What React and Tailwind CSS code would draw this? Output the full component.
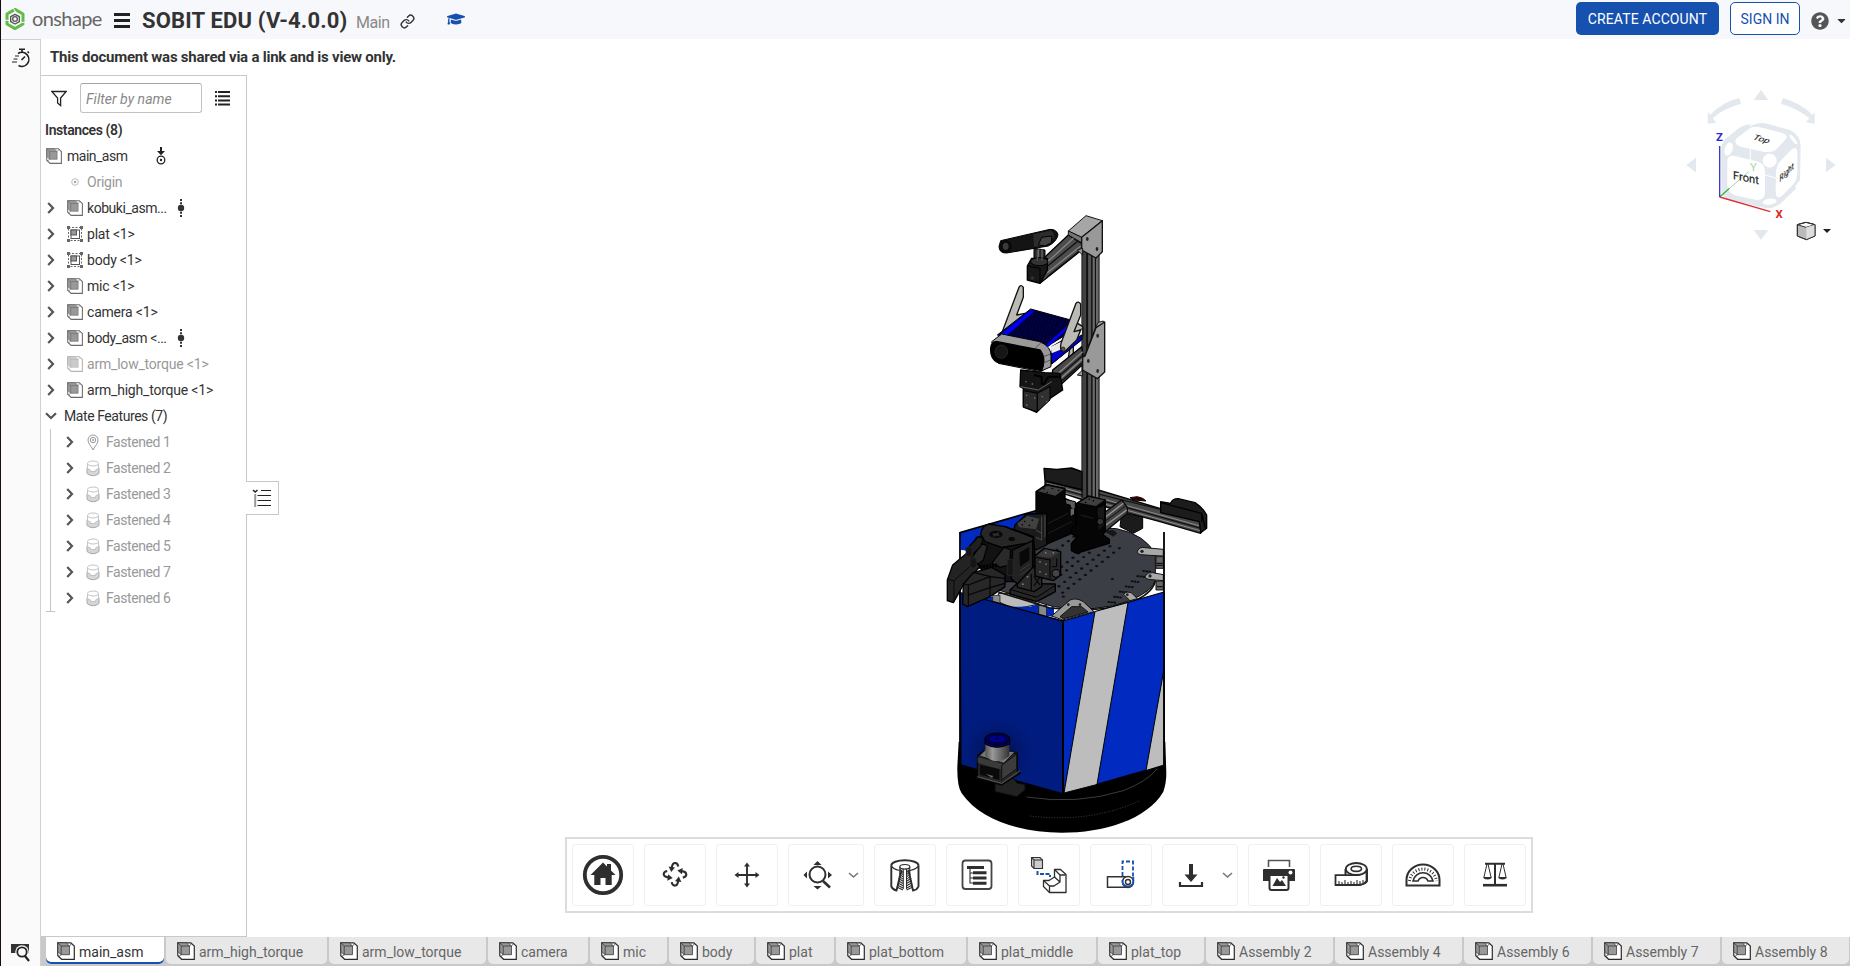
import React from "react";
import { Link } from "lucide-react";
import { FaGraduationCap, FaCaretDown, FaQuestionCircle } from "react-icons/fa";

function AsmIcon({ size = 18, soft = false, faded = false }) {
  const line = soft ? "#6b6b6b" : "#2b2b2b";
  return (
    <svg width={size} height={size} viewBox="0 0 18 18" className={faded ? "shrink-0 opacity-50" : "shrink-0"}>
      <path d="M.8 .8H13.8L17.3 4V17.3H4.6L.8 13.8Z" fill="#fff" stroke={line} strokeWidth="1.2" />
      <path d="M.8 .8H9L12.5 4V12.7H4.2L.8 9.5Z" fill="#999" stroke={line} strokeWidth=".7" />
      <path d="M.8 .8L4.2 4H12.5M4.2 4V12.7M12.5 4L14.6 1.6M4.2 12.7L1.6 14.6" fill="none" stroke={line} strokeWidth=".7" />
    </svg>
  );
}

function GroupIcon() {
  return (
    <svg width="16" height="16" viewBox="0 0 16 16" className="shrink-0">
      <rect x="1.5" y="1.5" width="13" height="13" fill="none" stroke="#666" strokeDasharray="2 1.5" />
      <path d="M0 0h3v3H0zM13 0h3v3h-3zM0 13h3v3H0zM13 13h3v3h-3z" fill="#666" />
      <rect x="4" y="4" width="8.5" height="8.5" fill="#fff" stroke="#555" />
      <rect x="4" y="4" width="5.5" height="5" fill="#999" stroke="#555" />
    </svg>
  );
}

function MateIcon() {
  return (
    <svg width="14" height="17" viewBox="0 0 14 17" className="shrink-0">
      <path d="M1 8Q1 6.5 3 8L4.5 9.5V11.5H9.5V9.5L11 8Q13 6.5 13 8V13.5Q7 18 1 13.5Z" fill="#d6d6d6" stroke="#aaa" />
      <path d="M1.5 3.5V8.5L4.5 10V11.5H9.5V10L12.5 8.5V3.5" fill="#fff" stroke="#c4c4c4" />
      <ellipse cx="7" cy="3.5" rx="5.5" ry="2.5" fill="#fff" stroke="#c4c4c4" />
    </svg>
  );
}

function PinIcon() {
  return (
    <svg width="14" height="17" viewBox="0 0 14 17" className="shrink-0" fill="none" stroke="#999">
      <path d="M7 16C5 11.5 2 10 2 6A5 5 0 0 1 12 6C12 10 9 11.5 7 16Z" />
      <circle cx="7" cy="6" r="2.7" />
      <circle cx="7" cy="6" r="1" fill="#999" stroke="none" />
    </svg>
  );
}

function Chevron() {
  return (
    <svg width="8" height="12" viewBox="0 0 8 12" className="shrink-0">
      <path d="M1.2 1L6 6L1.2 11" fill="none" stroke="#555" strokeWidth="2.2" />
    </svg>
  );
}

function DofIcon() {
  return (
    <svg width="8" height="18" viewBox="0 0 8 18" className="shrink-0" fill="#333">
      <circle cx="4" cy="9" r="3.2" />
      <path d="M3 0h2v2H3zM3 3.3h2v2H3zM3 12.7h2v2H3zM3 16h2v2H3z" />
    </svg>
  );
}

const instances = [
  { name: "kobuki_asm...", kind: "asm", dof: true },
  { name: "plat <1>", kind: "group" },
  { name: "body <1>", kind: "group" },
  { name: "mic <1>", kind: "asm" },
  { name: "camera <1>", kind: "asm" },
  { name: "body_asm <...", kind: "asm", dof: true },
  { name: "arm_low_torque <1>", kind: "asm", faded: true },
  { name: "arm_high_torque <1>", kind: "asm" },
];

const mates = [1, 2, 3, 4, 5, 7, 6];

const tabs = [
  ["main_asm", "w-[118px]"],
  ["arm_high_torque", "w-[161px]"],
  ["arm_low_torque", "w-[157px]"],
  ["camera", "w-[100px]"],
  ["mic", "w-[77px]"],
  ["body", "w-[85px]"],
  ["plat", "w-[78px]"],
  ["plat_bottom", "w-[130px]"],
  ["plat_middle", "w-[128px]"],
  ["plat_top", "w-[106px]"],
  ["Assembly 2", "w-[127px]"],
  ["Assembly 4", "w-[127px]"],
  ["Assembly 6", "w-[127px]"],
  ["Assembly 7", "w-[127px]"],
  ["Assembly 8", "w-[127px]"],
];

function Header() {
  return (
    <header className="flex h-[39px] shrink-0 items-center bg-[#f7f8fb] text-[#333]">
      <svg width="20" height="22" viewBox="0 0 60 66" className="mb-px ml-[4px]">
        <path d="M30 4L54 18V48L30 62L6 48V18Z" fill="none" stroke="#62bb46" strokeWidth="9" strokeLinejoin="round" />
        <path d="M24 0L32 12M60 44L46 42M0 36L14 38" stroke="#f7f8fb" strokeWidth="3" />
        <path d="M30 19L43 26V41L30 48L17 41V26Z" fill="none" stroke="#555" strokeWidth="4" strokeLinejoin="round" />
        <circle cx="30" cy="33" r="7" fill="none" stroke="#555" strokeWidth="4" />
      </svg>
      <span className="ml-[7px] mt-[-4px] w-[68px] font-[Lato] text-[20px] leading-none tracking-[-0.6px] text-[#666]">onshape</span>
      <div className="ml-[14px] mt-[2px] flex w-4 flex-col gap-[3px]">
        <i className="h-[3px] bg-[#222]" /><i className="h-[3px] bg-[#222]" /><i className="h-[3px] bg-[#222]" />
      </div>
      <h1 className="ml-[12px] mt-[2px] w-[206px] whitespace-nowrap text-[22px] font-bold leading-none tracking-[0.18px]">SOBIT EDU (V-4.0.0)</h1>
      <span className="ml-[8px] mt-[7px] w-[34px] text-[16px] leading-none tracking-[-0.4px] text-[#888]">Main</span>
      <Link size={15} strokeWidth={2.3} className="ml-[10px] mt-[3px]" />
      <FaGraduationCap size={18} className="ml-[32px] mt-[-2px] text-[#1651b0]" />
      <div className="ml-auto flex items-start self-stretch pt-[2px] text-[14px]">
        <button className="h-[33px] w-[143px] rounded-[5px] bg-[#1651b0] pt-px tracking-[0.1px] text-white">CREATE ACCOUNT</button>
        <button className="ml-[11px] h-[33px] w-[70px] rounded-[5px] border border-[#1651b0] bg-white pt-px text-[#1651b0]">SIGN IN</button>
        <FaQuestionCircle size={18} className="ml-[11px] mt-[10px] text-[#555]" />
        <FaCaretDown size={13} className="ml-[6px] mr-[2px] mt-[12px]" />
      </div>
    </header>
  );
}

function TreePanel() {
  return (
    <aside className="relative flex w-[206px] flex-col border-b border-r border-t border-[#c8c8c8] text-[14px] text-[#333]">
      <div className="flex h-[41px] shrink-0 items-center pl-[10px] pt-[3px]">
        <svg width="16" height="17" viewBox="0 0 16 17"><path d="M.8 1.5H15.2L9.6 8V15.5L6.6 13V8Z" fill="none" stroke="#222" strokeWidth="1.3" /></svg>
        <div className="ml-[13px] flex h-[30px] w-[122px] items-center rounded-[3px] border border-[#c2c2c2] border-t-[#a5a5a5] pl-[5px] pt-[3px] italic tracking-[0.04px] text-[#888]">Filter by name</div>
        <svg width="15" height="15" viewBox="0 0 15 15" className="ml-[13px]" fill="#222">
          <path d="M0 0h2v2H0zM3 0h12v2H3zM0 4.2h2v2H0zM3 4.2h12v2H3zM0 8.4h2v2H0zM3 8.4h12v2H3zM0 12.6h2v2H0zM3 12.6h12v2H3z" />
        </svg>
      </div>
      <div className="flex h-[26px] shrink-0 items-center pl-[4px] font-semibold tracking-[-0.4px]">Instances (8)</div>
      <div className="flex h-[26px] shrink-0 items-center pl-[5px]">
        <AsmIcon size={16} soft />
        <span className="ml-[5px] w-[89px] pt-px tracking-[-0.5px]">main_asm</span>
        <svg width="10" height="18" viewBox="0 0 10 18" fill="none" stroke="#222" strokeWidth="1.3">
          <path d="M5 0V6" strokeWidth="2" /><path d="M1 4H9L5 8.3Z" fill="#222" stroke="none" />
          <circle cx="5" cy="13" r="3.8" /><circle cx="5" cy="13" r="1.2" fill="#222" stroke="none" />
        </svg>
      </div>
      <div className="flex h-[26px] shrink-0 items-center pl-[30px] text-[#999]">
        <svg width="8" height="8" viewBox="0 0 8 8"><circle cx="4" cy="4" r="3.3" fill="none" stroke="#bbb" /><circle cx="4" cy="4" r="1.3" fill="#aaa" /></svg>
        <span className="ml-[8px] pt-px tracking-[-0.25px]">Origin</span>
      </div>
      {instances.map((it) => (
        <div key={it.name} className="flex h-[26px] shrink-0 items-center pl-[6px]">
          <Chevron />
          <div className="ml-[12px] flex w-[16px]">{it.kind === "asm" ? <AsmIcon size={16} soft faded={it.faded} /> : <GroupIcon />}</div>
          <span className={it.faded ? "ml-[4px] whitespace-nowrap pt-px tracking-[-0.2px] text-[#999]" : it.dof ? "ml-[4px] w-[90px] whitespace-nowrap pt-px tracking-[-0.45px]" : "ml-[4px] whitespace-nowrap pt-px tracking-[-0.2px]"}>{it.name}</span>
          {it.dof && <DofIcon />}
        </div>
      ))}
      <div className="flex h-[26px] shrink-0 items-center pl-[4px]">
        <svg width="12" height="8" viewBox="0 0 12 8"><path d="M1 1.2L6 6L11 1.2" fill="none" stroke="#555" strokeWidth="2.2" /></svg>
        <span className="ml-[7px] pt-px tracking-[-0.43px]">Mate Features (7)</span>
      </div>
      <div className="ml-[9px] flex flex-col border-l border-[#c4c4c4]">
        {mates.map((n) => (
          <div key={n} className="flex h-[26px] shrink-0 items-center pl-[15px] text-[#999]">
            <Chevron />
            <div className="ml-[12px] flex">{n === 1 ? <PinIcon /> : <MateIcon />}</div>
            <span className="ml-[6px] pt-px tracking-[-0.42px]">Fastened {n}</span>
          </div>
        ))}
      </div>
      <div className="ml-[5px] h-px w-[9px] shrink-0 bg-[#c4c4c4]" />
      <div className="absolute left-[205px] top-[405px] flex h-[34px] w-[33px] items-center justify-center border border-l-0 border-[#c8c8c8] bg-white">
        <svg width="19" height="18" viewBox="0 0 19 18" fill="none" stroke="#222" className="-ml-[2px]">
          <path d="M1 1L3.2 3L5.5 1" strokeWidth="1.5" /><path d="M3.2 5V18" stroke="#999" strokeWidth="2" />
          <path d="M9 1.5H19M5.5 6.5H19M5.5 11.5H19M5.5 16.5H19" strokeWidth="1.1" />
        </svg>
      </div>
    </aside>
  );
}

/* Deck hole rows: start x, start y, count; each runs down and to the left. */
const holeRows = [[568, 295, 11], [540, 289, 11], [478, 308, 6], [446, 310, 5], [432, 260, 5]];
const tableHoles = holeRows.flatMap(([x, y, n]) => Array.from({ length: n }, (_, i) => [x - i * 17, y + i * 13.3]));
const cornerHoles = [0, 1, 2].flatMap((r) => Array.from({ length: 7 }, (_, c) => [536 + c * 17.5 + r * 9, 456 - c * 15.5 + r]));

function Robot() {
  return (
    <svg width="290" height="640" viewBox="930 200 290 640" className="absolute left-[683px] top-[125px]">
      <defs>
        <linearGradient id="pole" x1="0" x2="1" y1="0" y2="0">
          <stop offset="0" stopColor="#3c3c3c" /><stop offset=".22" stopColor="#444" /><stop offset=".26" stopColor="#111" /><stop offset=".36" stopColor="#111" />
          <stop offset=".38" stopColor="#555" /><stop offset=".5" stopColor="#555" /><stop offset=".52" stopColor="#0c0c0c" /><stop offset=".62" stopColor="#2c2c2c" />
          <stop offset=".64" stopColor="#6d6d6d" /><stop offset=".74" stopColor="#6d6d6d" /><stop offset=".76" stopColor="#111" /><stop offset=".84" stopColor="#111" /><stop offset=".86" stopColor="#6a6a6a" /><stop offset="1" stopColor="#6a6a6a" />
        </linearGradient>
        <linearGradient id="lidar" x1="0" x2="1" y1="0" y2="0"><stop offset="0" stopColor="#555" /><stop offset=".3" stopColor="#999" /><stop offset="1" stopColor="#333" /></linearGradient>
        <radialGradient id="shade" cx="205" cy="400" r="130" gradientUnits="userSpaceOnUse"><stop offset="0" stopColor="#000830" stopOpacity=".9" /><stop offset="1" stopColor="#001c80" stopOpacity="0" /></radialGradient>
        <pattern id="mesh" width="10" height="8" patternUnits="userSpaceOnUse" patternTransform="rotate(17)"><rect width="10" height="8" fill="#000070" /><path d="M0 2H7M3 6H10" stroke="#00000c" strokeWidth="3.5" /><path d="M0 4L10 0" stroke="#0000c0" strokeWidth="1" /></pattern>
      </defs>

      {/* drive base */}
      <g transform="translate(930 620) scale(.33333)">
        <path d="M86 365L82 440Q81 500 95 520C150 600 270 638 395 638C520 638 650 600 700 515Q709 490 709 460L706 365Z" fill="#000" />
        <path d="M290 531Q440 555 580 512Q650 485 682 446" fill="none" stroke="#777" strokeWidth="1.5" />
        <path d="M300 588Q480 610 630 542" fill="none" stroke="#666" strokeWidth="1.5" strokeDasharray="4 4" />
      </g>

      {/* rear of the body and deck */}
      <g transform="translate(930 450) scale(.33333)">
        <path d="M90 248L325 180L400 230L220 310L92 300Z" fill="#002ac0" />
        <path d="M90 248L325 180" stroke="#000" strokeWidth="5" />
        <path d="M92 420L90 470L398 512L703 425L672 300L180 400Z" fill="#fff" />
        <path d="M92 440L190 440L210 460L398 512L92 512Z" fill="#0028b8" />
        <path d="M205 430L235 430L328 462L290 470L250 476L205 455Z" fill="#bbb" stroke="#111" strokeWidth="3" />
        <path d="M188 436H210V460L188 454Z" fill="#888" stroke="#111" strokeWidth="2" />
        <path d="M300 470L326 462V494L240 470Z" fill="#0028b8" />
        <path d="M326 466H350V502L326 496Z" fill="#888" stroke="#111" strokeWidth="3" />
        <path d="M350 475L372 470V500L350 498Z" fill="#0028b8" />
        <path d="M205 420L350 260Q450 225 560 236Q650 255 676 315V390Q672 420 600 452Q500 490 370 470Z" fill="#3b3f45" stroke="#0a0a0a" strokeWidth="3" />
        <path d="M205 426L360 474Q520 492 620 450Q670 425 676 392" fill="none" stroke="#111" strokeWidth="5" />
        {tableHoles.map(([x, y], i) => <ellipse key={i} cx={x} cy={y} rx="5" ry="3.5" fill="#0d0f12" />)}
        {cornerHoles.map(([x, y], i) => <ellipse key={i} cx={x} cy={y} rx="4.5" ry="3.2" fill="#0d0f12" />)}
        <ellipse cx="547" cy="387" rx="5" ry="3" fill="#111" /><ellipse cx="400" cy="440" rx="5" ry="3.5" fill="#111" />
        <path d="M520 242L550 240L562 250L550 260Z" fill="#15171a" />
        <g fill="#a8a8a8" stroke="#111" strokeWidth="3">
          <path d="M624 300Q630 290 645 293L700 298V318L660 316L632 314Q618 310 624 300Z" />
          <path d="M648 375Q655 366 668 368L700 374V392L676 390L656 388Q642 384 648 375Z" />
          <path d="M678 320H700V355H678ZM678 393H700V420H678Z" fill="#666" />
          <path d="M580 432Q590 422 604 428L622 446L600 452Z" />
        </g>
        <circle cx="636" cy="304" r="5" fill="#222" /><circle cx="660" cy="378" r="5" fill="#222" /><circle cx="592" cy="434" r="4" fill="#222" />
        <path d="M680 340H698M680 346H698M680 410H698" stroke="#111" strokeWidth="4" />
      </g>

      {/* outer panels */}
      <path d="M960 592.7L1063 621V794L961 765Z" fill="#001c80" stroke="#000" strokeWidth="1.3" />
      <path d="M1063 621L1164 592V765L1063 794Z" fill="#002ac0" stroke="#000" strokeWidth="1.3" />
      <path d="M1095 611.5L1128 602.5L1097 784.5L1064 793Z" fill="#bdbdbd" stroke="#000" strokeWidth="1" />
      <path d="M1164 669L1146 770.5L1164 765Z" fill="#bdbdbd" stroke="#000" strokeWidth="1" />
      <path d="M960 532V765M1164 532V765" stroke="#000" strokeWidth="1.8" />
      <path d="M1063 620V794" stroke="#000" strokeWidth="2" />

      {/* lidar */}
      <g transform="translate(930 620) scale(.33333)">
        <path d="M93 240H396V518L93 434Z" fill="url(#shade)" />
        <path d="M195 480L250 475L262 490L285 493V510L260 530L195 515Z" fill="#222" stroke="#0a0a0a" strokeWidth="3" />
        <path d="M143 408L160 392L262 400V455L270 460L215 495L142 475Z" fill="#262626" stroke="#050505" strokeWidth="4" />
        <path d="M148 408L168 388L255 395L222 430Z" fill="#777" stroke="#111" strokeWidth="3" />
        <path d="M143 412L218 432V450L143 428Z" fill="#3a3a3a" />
        <path d="M150 434L208 448V480L150 464Z" fill="#0a0a0a" /><path d="M168 462L190 468L186 474Z" fill="#666" />
        <path d="M215 436L260 402V446L215 480Z" fill="#3c3c3c" stroke="#111" strokeWidth="3" />
        <path d="M142 470L215 490L270 452" fill="none" stroke="#555" strokeWidth="3" />
        <path d="M166 360V408Q200 440 238 408V360Z" fill="url(#lidar)" />
        <path d="M165 355V372Q200 392 239 372V355Z" fill="#000070" stroke="#000" strokeWidth="3" />
        <ellipse cx="202" cy="357" rx="37" ry="18" fill="#00005c" stroke="#000" strokeWidth="3" />
        <ellipse cx="202" cy="357" rx="26" ry="12" fill="#000090" stroke="#000020" strokeWidth="3" />
        <path d="M196 356H208M202 352V360" stroke="#000" strokeWidth="2" />
      </g>

      {/* cross rails, motors and gripper */}
      <g transform="translate(930 450) scale(.33333)" strokeLinejoin="round">
        <path d="M365 498L420 450Q440 442 460 455L492 485L440 499L398 510Z" fill="#999" stroke="#111" strokeWidth="3" />
        <path d="M390 500L425 470H455L474 486L440 496L400 506Z" fill="#333" stroke="#111" strokeWidth="3" />
        <circle cx="415" cy="464" r="4" fill="#222" /><circle cx="450" cy="464" r="4" fill="#222" />
        <path d="M575 190L638 200V235L610 250L570 230Z" fill="#1b1b1b" stroke="#000" strokeWidth="3" />
        <path d="M600 143L622 140Q642 144 648 153L610 150Z" fill="#300" stroke="#100" strokeWidth="3" />
        <path d="M345 95L505 120L822 215L812 250L690 215L505 165L345 112Z" fill="#484848" stroke="#050505" strokeWidth="4" />
        <path d="M350 100L818 230M380 122L814 243" stroke="#999" strokeWidth="2.5" />
        <path d="M360 108L816 236M350 94L700 180" stroke="#111" strokeWidth="3.5" />
        <path d="M342 55L380 58L425 54L458 66V120L345 92Z" fill="#1c1c1c" stroke="#000" strokeWidth="4" />
        <path d="M692 155L722 160Q728 145 745 146L795 158Q820 175 830 195V235L812 248L808 215L692 188Z" fill="#1c1c1c" stroke="#000" strokeWidth="4" />
        <path d="M692 158L815 190L826 235M815 190V215" fill="none" stroke="#000" strokeWidth="4" />
        <path d="M520 190L575 150L592 172V190L525 245Z" fill="#444" stroke="#0a0a0a" strokeWidth="4" />
        <path d="M524 203L580 160M524 228L590 180" stroke="#999" strokeWidth="4" />
        <path d="M524 215L588 167" stroke="#111" strokeWidth="3" />

        {/* shoulder motors */}
        <path d="M318 125L350 103L405 115V145L438 160V235L425 250L345 285L318 200Z" fill="#060606" stroke="#000" strokeWidth="4" />
        <path d="M324 124L352 107L402 118L376 137Z" fill="#404040" /><path d="M340 116l4 1M365 115l4 1M384 121l4 1M350 127l4 1" stroke="#000" strokeWidth="4" />
        <path d="M405 148L436 155V176H424L420 165L408 162Z" fill="#5a5a5a" stroke="#000" strokeWidth="3" />
        <path d="M422 178L432 174V192L422 198Z" fill="#666" />
      </g>
      <rect x="1082.3" y="250" width="16.4" height="250" fill="url(#pole)" />
      <path d="M1082 250V498M1099 250V500" stroke="#000" strokeWidth="1.1" />
      <g transform="translate(930 450) scale(.33333)" strokeLinejoin="round">
        <path d="M440 160L475 138L526 150V245L518 254L538 268V280L505 290L440 310L424 302V280L440 262L424 250V235L440 225Z" fill="#050505" stroke="#000" strokeWidth="4" />
        <path d="M447 158L476 141L522 151L498 168Z" fill="#404040" /><path d="M465 157l4 1M488 152l4 1M476 147l4 1" stroke="#000" strokeWidth="4" />
        <path d="M503 175L522 168V225L506 240Z" fill="#181818" /><circle cx="511" cy="215" r="10" fill="#333" stroke="#000" strokeWidth="3" />
        <path d="M345 225L415 190M355 250L425 215M452 195L490 205" stroke="#1f1f1f" strokeWidth="3" />

        {/* forearm */}
        <path d="M255 225L290 192L350 190V285L318 300L250 250Z" fill="#1b1b1b" stroke="#000" strokeWidth="4" />
        <path d="M262 220L292 198L328 206L318 238L268 232Z" fill="#414141" />
        <path d="M282 214l4 1M305 210l4 1M296 226l4 1M275 224l4 1" stroke="#000" strokeWidth="4" />
        <path d="M335 200V270M345 196V262M318 240L335 250M318 262L335 270" stroke="#4a4a4a" strokeWidth="3" />

        {/* gripper chassis */}
        <path d="M118 300L140 262L165 255L225 230L310 260L318 345L270 395L220 395L150 355Z" fill="#121212" stroke="#000" strokeWidth="4" />
        <path d="M240 420L262 400L376 402V425L320 455L240 432Z" fill="#262626" stroke="#000" strokeWidth="4" />
        <path d="M240 418L320 442L376 406" fill="none" stroke="#000" strokeWidth="3" />
        <path d="M262 372L300 345L335 372V410L312 425L262 412Z" fill="#2a2a2a" stroke="#000" strokeWidth="4" />
        <path d="M304 372V420M312 380L330 405M332 378L312 408" stroke="#080808" strokeWidth="4" />
        <path d="M272 385l5 1M290 380l5 1M276 402l5 1" stroke="#888" strokeWidth="4" />
        <path d="M315 318L342 295L392 305V375L370 392L315 378Z" fill="#272727" stroke="#000" strokeWidth="4" />
        <path d="M320 317L345 298L388 307L362 323Z" fill="#3a3a3a" />
        <path d="M360 326V386M318 322L360 330M366 350H380V325" stroke="#000" strokeWidth="3" fill="none" />
        <path d="M328 335l4 1M346 342l4 1M328 365l4 1M346 372l4 1M345 308l4 1M368 308l4 1" stroke="#888" strokeWidth="4" />
        <circle cx="378" cy="370" r="12" fill="#444" stroke="#000" strokeWidth="3" />
        <path d="M152 252Q156 226 178 222L225 230L308 262Q315 278 290 280L215 292L165 275Z" fill="#272727" stroke="#000" strokeWidth="4" />
        <ellipse cx="198" cy="253" rx="20" ry="11" fill="#080808" /><path d="M188 252L208 256M190 259L206 248" stroke="#333" strokeWidth="4" /><ellipse cx="245" cy="267" rx="10" ry="6" fill="#080808" />
        <path d="M248 300L308 272V352L262 402L243 385Z" fill="#222" stroke="#000" strokeWidth="4" />
        <path d="M268 308L298 290V330L270 350Z" fill="#080808" /><path d="M270 362L300 342M270 376L300 354" stroke="#3a3a3a" strokeWidth="3" />
        <path d="M185 340L222 292L242 300L238 345L210 352ZM128 320L155 280L172 288L160 330L135 350Z" fill="#2a2a2a" stroke="#000" strokeWidth="3.5" />
        <path d="M108 300L145 260L160 265L152 290L120 320Z" fill="#202020" stroke="#000" strokeWidth="3.5" />

        {/* fingers */}
        <path d="M68 345L112 308L150 350L100 405L70 458L52 452V390Z" fill="#232323" stroke="#000" strokeWidth="4" />
        <path d="M52 388L72 392V456M72 392L125 345" fill="none" stroke="#080808" strokeWidth="3" />
        <path d="M100 402L130 368L185 352L225 375V410L180 440L112 470L98 462Z" fill="#272727" stroke="#000" strokeWidth="4" />
        <path d="M100 402L115 405L180 380L225 385M115 435L182 412L225 400M115 405V468M180 380V440M132 368L182 380" fill="none" stroke="#050505" strokeWidth="3.5" />
        <path d="M108 292Q118 288 128 292V318Q118 324 108 318ZM120 326Q130 321 139 326V352Q130 357 120 352ZM232 330Q242 325 250 330V375Q240 380 232 375Z" fill="#161616" stroke="#2e2e2e" strokeWidth="2" />
        <path d="M150 350L205 345" stroke="#000" strokeWidth="10" strokeDasharray="6 3" />
      </g>

      {/* mast bracket, microphone and camera */}
      <g transform="translate(960 200) scale(.33333)" strokeLinejoin="round">
        <path d="M240 185L325 105L365 130V150L240 250Z" fill="#4c4c4c" stroke="#000" strokeWidth="4" />
        <path d="M258 190L345 110M262 218L362 138" stroke="#858585" strokeWidth="4" /><path d="M255 205L355 122M262 230L362 150" stroke="#111" strokeWidth="4" />
        <path d="M325 93L378 47L427 62L365 112Z" fill="#a6a6a6" stroke="#111" strokeWidth="3" />
        <path d="M325 93L365 112V128L325 105Z" fill="#777" stroke="#111" strokeWidth="3" />
        <path d="M365 112L427 62V155L408 174L365 150Z" fill="#999" stroke="#111" strokeWidth="4" />
        <path d="M352 150L368 145V165Z" fill="#999" stroke="#111" strokeWidth="3" />
        <path d="M222 145L255 150V185H222Z" fill="#282828" stroke="#000" strokeWidth="3" /><path d="M236 145V185M246 148V185" stroke="#777" strokeWidth="3" />
        <path d="M202 198L215 175H262V210L240 250L202 240Z" fill="#181818" stroke="#000" strokeWidth="4" /><ellipse cx="238" cy="185" rx="26" ry="12" fill="#333" stroke="#000" strokeWidth="3" />
        <path d="M232 150V182M246 152V182" stroke="#555" strokeWidth="4" />
        <path d="M202 198L240 205V250" fill="none" stroke="#000" strokeWidth="3" /><circle cx="217" cy="234" r="5" fill="#333" />
        <path d="M122 122L270 88Q290 88 294 104Q290 125 265 138L140 159Q118 160 117 140Z" fill="#141414" stroke="#000" strokeWidth="3" />
        <path d="M220 103L272 92Q285 98 280 115L250 138L222 140Z" fill="#2c2c2c" /><path d="M235 135L245 112L275 108V128L255 138Z" fill="#444" stroke="#000" strokeWidth="3" />
        <ellipse cx="137" cy="139" rx="18" ry="19" fill="#080808" /><ellipse cx="137" cy="139" rx="9" ry="11" fill="#3a3a3a" />

        <g fill="#bcbab5" stroke="#111" strokeWidth="4">
          <path d="M128 392L177 262Q182 252 190 262V292L170 345L195 340L150 392Z" />
          <path d="M345 365L368 380V405L330 440L325 475L340 465V430Z" />
        </g>
        <path d="M278 510L365 440L372 490L285 570L275 540Z" fill="#484848" stroke="#000" strokeWidth="4" />
        <path d="M283 530L368 455M286 550L370 475" stroke="#888" strokeWidth="4" /><path d="M284 540L370 465M286 560L370 485" stroke="#111" strokeWidth="4" />
        <path d="M182 510L255 518L300 520L308 570L270 595L230 637L190 620V565L180 560Z" fill="#151515" stroke="#000" strokeWidth="4" />
        <path d="M182 560L235 570L275 545" fill="none" stroke="#666" strokeWidth="3" />
        <path d="M190 572L232 580V635L190 622Z" fill="#2b2b2b" stroke="#000" strokeWidth="3" /><path d="M232 580L270 560V600L232 635Z" fill="#303030" stroke="#000" strokeWidth="3" />
        <path d="M222 525L245 530V555M250 555L265 530L300 530" fill="none" stroke="#000" strokeWidth="6" />
        <path d="M198 586h4M222 594h4M198 615h4M245 590h4M258 605h4M196 545h4M215 552h4" stroke="#777" strokeWidth="4" />
        <path d="M275 440L368 385V415L275 492Z" fill="#eceae4" stroke="#000" strokeWidth="3" /><path d="M272 462L365 405V420L275 492Z" fill="#0000c8" stroke="#000" strokeWidth="3" />
        <path d="M272 440L305 425V448L275 460Z" fill="#eceae4" />
        <path d="M112 405L212 327L340 362L325 400L260 440Z" fill="url(#mesh)" stroke="#000" strokeWidth="3" />
        <path d="M118 406L212 330L224 333L137 410ZM255 438L326 372L334 376L266 440Z" fill="#0000f0" />
        <path d="M95 425L125 402L240 425Q275 440 273 470V500L240 515L115 490Z" fill="#9a9a9a" stroke="#000" strokeWidth="3" />
        <path d="M112 425L240 450Q260 475 245 512L112 487Q90 475 92 445Q95 422 112 425Z" fill="#000" stroke="#000" strokeWidth="4" />
        <path d="M222 448L245 426M250 470L272 462M248 490L272 480" stroke="#333" strokeWidth="2" />
        <ellipse cx="124" cy="455" rx="19" ry="20" fill="#161616" stroke="#333" strokeWidth="2" />
        <path d="M303 430L348 310Q355 302 362 312V345L342 395L362 390L350 420L312 457Q298 452 303 430Z" fill="#bcbab5" stroke="#111" strokeWidth="4" />
        <circle cx="309" cy="447" r="6" fill="#555" stroke="#111" strokeWidth="2" />
        <path d="M415 367L430 363L434 368L372 470L408 380Z" fill="#aaa" stroke="#111" strokeWidth="3" />
        <path d="M408 383L434 366V516L412 536L368 510V472L375 468Z" fill="#999" stroke="#111" strokeWidth="4" />
        <path d="M352 525L368 510V528Z" fill="#999" stroke="#111" strokeWidth="3" />
        <g fill="#222"><ellipse cx="382" cy="117" rx="4" ry="6" /><ellipse cx="411" cy="147" rx="4" ry="6" /><ellipse cx="413" cy="407" rx="4" ry="6" /><ellipse cx="385" cy="483" rx="4" ry="6" /><ellipse cx="413" cy="513" rx="4" ry="6" /></g>
      </g>
    </svg>
  );
}

function ViewCube() {
  return (
    <svg width="170" height="165" viewBox="390 240 510 495" className="absolute right-0 top-[5px]" fontFamily="Roboto, sans-serif">
      <g fill="#e2e8ee">
        <path d="M633 270L655 300H611ZM633 719L611 690H655ZM409 495L438 473V517ZM857 495L828 473V517Z" />
        <path d="M568 294L573 311Q520 325 488 355L499 368L473 371L474 336L481 344Q515 307 568 294Z" />
        <path d="M698 294L693 311Q748 328 778 355L768 367L794 371L794 337L787 345Q755 310 698 294Z" />
        <path d="M596 373L572 380L526 417Q514 430 514 450V575Q517 590 532 597L645 624Q668 628 690 612L737 567V556L750 540L752 440Q752 405 720 390L645 370Q625 366 610 375Z" />
      </g>
      <g fill="#fff">
        <path d="M600 385Q610 377 630 382L695 398Q716 405 708 417L680 447Q670 458 640 455L572 440Q548 430 560 415Z" />
        <path d="M532 480Q535 465 555 468L620 484Q645 490 645 515V580Q643 602 620 600L560 587Q532 580 532 555Z" />
        <path d="M678 515Q680 495 692 482L725 448Q740 438 742 455V520Q742 540 728 555L695 588Q678 600 677 575Z" />
        <ellipse cx="536" cy="447" rx="12" ry="20" transform="rotate(20 536 447)" /><circle cx="659" cy="482" r="21" />
        <ellipse cx="659" cy="605" rx="21" ry="9" transform="rotate(-8 659 605)" /><ellipse cx="730" cy="418" rx="18" ry="5" transform="rotate(52 730 418)" />
      </g>
      <path d="M601 445V482M645 525L678 534M597 370L605 382" stroke="#fff" strokeWidth="3" />
      <path d="M509 591L596 515" stroke="#9edb9e" strokeWidth="3" /><path d="M509 591L538 565" stroke="#22b422" strokeWidth="3.5" />
      <path d="M509 438V591" stroke="#3a3ac8" strokeWidth="4" /><path d="M509 591L661 635" stroke="#dc3232" strokeWidth="4" />
      <g fontWeight="700" fontSize="34" textAnchor="middle">
        <text x="508" y="424" fill="#2a2ad8">Z</text><text x="687" y="654" fill="#dc2626">X</text><text x="610" y="513" fill="#a5dca5" fontWeight="400">Y</text>
      </g>
      <g fill="#222" stroke="#222" strokeWidth=".5" textAnchor="middle">
        <text transform="matrix(.98 .2 0 1 588 545)" fontSize="34">Front</text>
        <text transform="matrix(.86 .24 -.5 .58 630 424)" fontSize="33">Top</text>
        <text transform="matrix(.66 -.64 0 1 710 526)" fontSize="28">Right</text>
      </g>
      <g stroke="#333" strokeWidth="3" strokeLinejoin="round">
        <path d="M742 674L768 667L795 674V708L769 719L742 708Z" fill="#bbb" /><path d="M742 674L768 682L795 674L768 667Z" fill="#fff" /><path d="M769 682V719L795 708V674Z" fill="#ddd" stroke="none" />
        <path d="M742 674L768 667L795 674V708L769 719L742 708Z" fill="none" />
      </g>
      <path d="M819 687H843L831 699Z" fill="#222" />
    </svg>
  );
}

const hatch = [0, 1, 2, 3, 4, 5, 6, 7, 8];
const turns = ["rotate(0 31 30.3)", "rotate(90 31 30.3)", "rotate(180 31 30.3)", "rotate(270 31 30.3)"];
const I = { fill: "none", stroke: "#2e2e2e", strokeWidth: 1.6 };

/* Each drawing uses the 62 by 62 space of its button. */
const tools = [
  { id: "home", art: <g><circle cx="31" cy="31" r="18.2" fill="none" stroke="#2e2e2e" strokeWidth="3.8" /><path d="M31 18.5L43.5 31H39.7V41H33.5V34H28.5V41H22.3V31H18.5ZM35 20H39V27H35Z" fill="#2e2e2e" /></g> },
  { id: "rotate", art: <g>{turns.map((t) => <g key={t} transform={t}><path d="M27.8 24Q28.2 19 31.2 19Q33.6 19 34.3 22.5" fill="none" stroke="#2e2e2e" strokeWidth="2.1" /><path d="M24.6 22.6L31 23.4L27.2 28Z" fill="#2e2e2e" /></g>)}</g> },
  { id: "pan", art: <g><path d="M31 21V41M21 31H41" stroke="#2e2e2e" strokeWidth="1.9" /><path d="M31 18.5L34 22.5H28ZM31 43.5L28 39.5H34ZM18.5 31L22.5 28V34ZM43.5 31L39.5 34V28Z" fill="#2e2e2e" /></g> },
  { id: "zoom", menu: true, art: <g><circle cx="29.5" cy="30.5" r="8" fill="none" stroke="#2e2e2e" strokeWidth="2" /><path d="M35 37L42 43.5" stroke="#2e2e2e" strokeWidth="2.6" /><path d="M29.5 17L33.5 21H25.5ZM29.5 45.5L25.5 42H33.5ZM15.5 31L19 27.5V34.5ZM44 31L40 34.5V27.5Z" fill="#2e2e2e" /></g> },
  { id: "section", art: (
    <g {...I}>
      <path d="M17.3 21.5V42.5Q19 46 22.5 46.5L27.5 26M44.5 21.5V42.5Q43 46 39 46.5L34.5 26" fill="#fff" strokeWidth="1.9" />
      <path d="M17.3 21.5A13.6 5.3 0 0 1 44.5 21.5" strokeWidth="1.9" /><path d="M17.3 21.5Q18.5 25 25.5 26.5M44.5 21.5Q43 25 36 26.5" strokeWidth="1.2" />
      <ellipse cx="30.8" cy="22.8" rx="5" ry="2.3" strokeWidth="1.2" />
      <path d="M25.8 23V30M35.8 23V30M29.3 25V45M32.5 25V45" strokeWidth="1" />
      <g strokeWidth="1.1">{hatch.map((n) => <path key={n} d={`M${26 - n * 0.4} ${25.5 + n * 2.2}L29 ${28.5 + n * 2.2}M${35.6 + n * 0.4} ${25.5 + n * 2.2}L32.6 ${28.5 + n * 2.2}`} />)}</g>
    </g>
  ) },
  { id: "list", art: <g><rect x="16.5" y="16.5" width="29" height="28.5" rx="3" {...I} stroke="#444" strokeWidth="1.8" /><path d="M21 23.5H38" stroke="#2e2e2e" strokeWidth="3" /><path d="M24 25V39H28M24 29H28M24 34H28" {...I} strokeWidth="1.1" /><path d="M27 28.7H40.5M27 34H40.5M27 39.3H40.5" stroke="#2e2e2e" strokeWidth="3" /></g> },
  { id: "explode", art: <g><g stroke="#333" strokeWidth="1.1"><path d="M13.5 13.5H22L24.5 16V24.5H16L13.5 22Z" fill="#ccc" /><path d="M13.5 13.5L16 16H24.5M16 16V24.5" fill="none" /></g><path d="M19.5 27V30H32V33" fill="none" stroke="#1651b0" strokeWidth="2" strokeDasharray="4 1.5" /><g {...I} strokeWidth="1.3" strokeLinejoin="round"><path d="M36.5 25.5H42.5L48 30.5V48.5H31.5L25.5 42.5V36.5H31L36.5 33Z" fill="#fff" /><path d="M36.5 25.5L42 31V38L36 42H31.5L25.5 36.5M42 31L47.5 31M31.5 42V48.5M36.5 33L42 38" /></g></g> },
  { id: "hinge", art: <g><path d="M32.5 32V17.5H43V36" fill="none" stroke="#1651b0" strokeWidth="1.8" strokeDasharray="4 2" /><path d="M38 32.8H17.5V43.3H38" fill="#fff" stroke="#333" strokeWidth="1.5" /><circle cx="38" cy="38" r="5.5" fill="#fff" stroke="#333" strokeWidth="1.4" /><path d="M32.5 36V38A5.5 5.5 0 0 0 43.3 38V33" fill="none" stroke="#1651b0" strokeWidth="1.8" /><circle cx="38" cy="38" r="2.5" fill="none" stroke="#333" strokeWidth="1.4" /></g> },
  { id: "export", menu: true, art: <g fill="none" stroke="#2e2e2e"><path d="M29 20V32" strokeWidth="4" /><path d="M22.5 30.5H35.5L29 38Z" fill="#2e2e2e" stroke="none" /><path d="M18 38V42H40V38" strokeWidth="2.2" /></g> },
  { id: "print", art: <g><path d="M20.5 23V16.5H41.5V23" {...I} stroke="#555" /><path d="M15 26Q15 25 16 25H46Q47 25 47 26V37H41V31H21V37H15Z" fill="#2e2e2e" /><path d="M21.5 31H40.5V44Q40.5 46 38.5 46H23.5Q21.5 46 21.5 44Z" fill="#fff" stroke="#2e2e2e" strokeWidth="2" /><path d="M24.5 42L29 34L32 38L34 36L38 42Z" fill="#2e2e2e" /><circle cx="35.5" cy="33.5" r="1.2" fill="#2e2e2e" /><circle cx="42.5" cy="28.5" r="2" fill="#fff" /></g> },
  { id: "measure", art: <g {...I}><path d="M25.5 25V31M47 25V37Q46 40 38 41" strokeWidth="2" /><path d="M15.5 31.2H34Q44 31 46.5 26V37Q44 41 37 41H15.5Z" fill="#fff" strokeWidth="1.8" /><ellipse cx="36.3" cy="25" rx="10.5" ry="6" fill="#fff" strokeWidth="1.8" /><ellipse cx="36.3" cy="24.8" rx="5.2" ry="2.6" fill="#fff" strokeWidth="1.6" /><path d="M19 41V37M22 41V38M25 41V36M28 41V38M31 41V37M34 41V38M37 41V36M40 40V37M43 39V36" strokeWidth="1.1" /></g> },
  { id: "angle", art: <g {...I}><path d="M14.5 41.5V36A16.5 15.5 0 0 1 47.5 36V41.5Z" strokeWidth="2" /><path d="M21 37A10.2 10.2 0 0 1 41 37H36Q34.5 33.5 31 33.5Q27.5 33.5 26 37Z" strokeWidth="1.6" /><path d="M17.5 37A13.6 13.6 0 0 1 44.5 37" strokeWidth="3" strokeDasharray="1 2" /></g> },
  { id: "mass", art: <g fill="none" stroke="#2e2e2e"><path d="M21 19.8H41M31 19.8V40" strokeWidth="2" /><path d="M23 20L20 33M24 20L27 33M38 20L35 33M39 20L42 33" strokeWidth="1" /><path d="M19 33H28Q27 35.5 23.5 35.5Q20 35.5 19 33ZM34 33H43Q42 35.5 38.5 35.5Q35 35.5 34 33Z" fill="#2e2e2e" stroke="none" /><path d="M19 41.2H43" strokeWidth="2.6" /></g> },
];

function Toolbar() {
  return (
    <div className="absolute left-[318px] top-[762px] flex h-[76px] w-[968px] items-center gap-[10px] border-2 border-[#dcdcdc] bg-white pl-[5px]">
      {tools.map((t) => (
        <div key={t.id} className={t.menu ? "flex h-[62px] w-[76px] shrink-0 items-center rounded-[3px] border border-[#f0f0f0]" : "flex h-[62px] w-[62px] shrink-0 items-center rounded-[3px] border border-[#f0f0f0]"}>
          <svg width="60" height="60" viewBox="1 1 60 60" className="shrink-0">{t.art}</svg>
          {t.menu && <svg width="11" height="7" viewBox="0 0 11 7" className="-ml-px shrink-0"><path d="M1 1L5.5 5L10 1" fill="none" stroke="#777" strokeWidth="1.6" /></svg>}
        </div>
      ))}
    </div>
  );
}

function LeftRail() {
  return (
    <nav className="flex w-[40px] shrink-0 flex-col items-center justify-between border-r border-t border-[#d0d0d0] bg-[#fafafa] pb-[4px] pt-[8px]">
      <svg width="20" height="20" viewBox="0 0 20 20" fill="none" stroke="#222" strokeWidth="1.6">
        <path d="M7 5.5A7 7 0 1 1 7.5 17.5M11 1V3.5M8 1.2H14M16.5 3.5L18 5M10.5 12L14 8.5" /><path d="M4 8H8M2.5 11H6.5M1 14H6" strokeWidth="1.1" />
      </svg>
      <svg width="19" height="18" viewBox="0 0 19 18">
        <path d="M0 0H18V9H0Z" fill="#333" /><circle cx="11" cy="8" r="6.8" fill="#fafafa" /><path d="M0 9V5H4" stroke="#333" fill="none" strokeWidth="2" /><circle cx="11" cy="8" r="4.7" fill="none" stroke="#222" strokeWidth="1.8" /><path d="M14 12L18 17" stroke="#222" strokeWidth="2.2" />
      </svg>
    </nav>
  );
}

export default function App() {
  return (
    <div className="flex h-[966px] w-[1850px] flex-col overflow-hidden border-l border-[#1a0a10] bg-white font-[Roboto,sans-serif] text-[#333]">
      <Header />
      <div className="flex min-h-0 flex-1">
        <LeftRail />
        <main className="flex min-w-0 flex-1 flex-col">
          <div className="flex h-[36px] shrink-0 items-center pl-[9px] pt-px text-[15px] font-bold tracking-[-0.23px]">This document was shared via a link and is view only.</div>
          <div className="flex min-h-0 flex-1">
            <TreePanel />
            <section className="relative min-w-0 flex-1">
              <Robot />
              <ViewCube />
              <Toolbar />
            </section>
          </div>
          <div className="flex h-[29px] shrink-0 gap-[2px] overflow-hidden bg-[#c9c9c9] pl-[5px]">
            {tabs.map(([name, width], i) => (
              <div key={name} className={`${width} flex h-[27px] shrink-0 items-center rounded-b-[5px] pl-[11px] text-[14px] ${i === 0 ? "bg-white text-[#333] shadow-[inset_0_-2px_0_#1651b0]" : "bg-[#e8e8e8] text-[#666]"}`}>
                <AsmIcon />
                <span className="ml-[4px] mt-[3px] whitespace-nowrap leading-none">{name}</span>
              </div>
            ))}
          </div>
        </main>
      </div>
    </div>
  );
}
